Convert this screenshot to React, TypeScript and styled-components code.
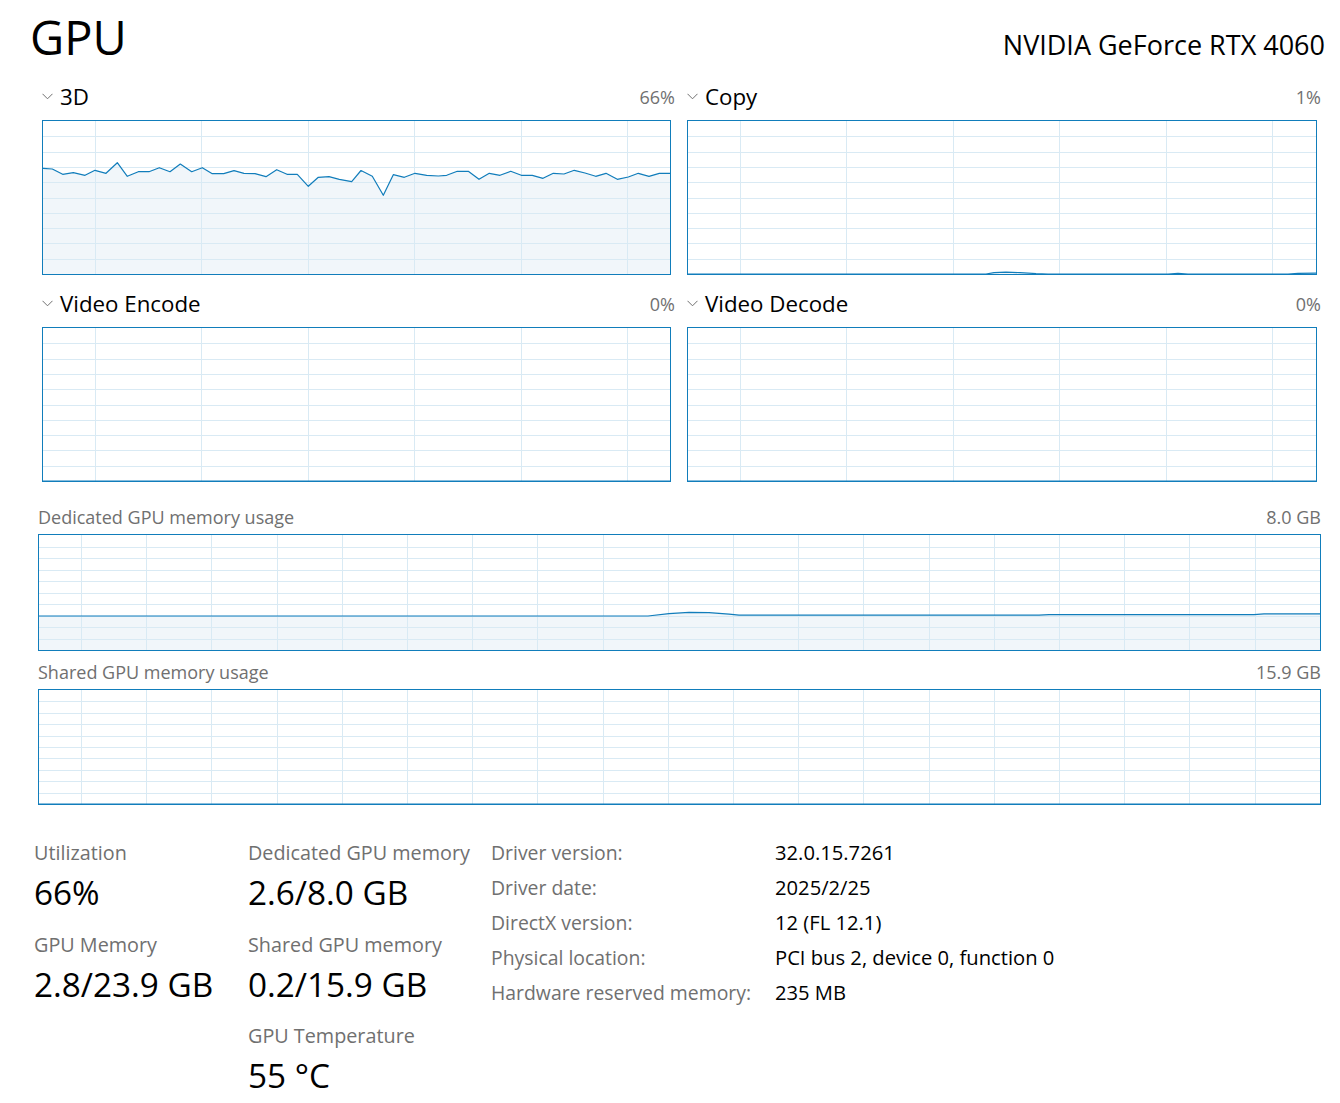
import React from 'react';
import styled, { createGlobalStyle } from 'styled-components';

const BLUE = '#117dbb';
const GRID = '#d9eaf4';
const FILL = '#f1f6fa';
const MUTED = '#707070';

const GlobalStyle = createGlobalStyle`
  html, body {
    margin: 0;
    padding: 0;
    background: #ffffff;
  }
  body {
    font-family: "Segoe UI", "Open Sans", "Noto Sans", sans-serif;
    color: #000000;
  }
`;

type Pt = [number, number];

// 3D engine history, in page pixels (inner area starts at 43,121)
const threeD: Pt[] = [
  [42.7, 168.3], [52.3, 169], [62.7, 174.3], [73.3, 172.7], [85, 175.3], [95, 170.3],
  [106, 173.3], [117.3, 162.7], [127.3, 176.3], [138.3, 171.7], [149, 171.7], [159.3, 167.7],
  [170, 171.7], [180.3, 164], [191.7, 171.7], [202.3, 167.7], [212.3, 173.7], [223.7, 173.7],
  [234, 170.7], [244, 173.3], [255, 173.7], [266, 176.7], [276.7, 169.7], [287, 174.3],
  [297.3, 174.3], [308.3, 186.3], [318.3, 177.3], [329, 176.7], [339.3, 179.3], [351.7, 181.7],
  [361, 170.5], [372.3, 176.3], [383.3, 195.3], [393.3, 174.7], [404.3, 177.3], [415, 173.3],
  [426.7, 175.3], [438.3, 176], [446.7, 175.3], [457.3, 171.3], [468.3, 171.3], [479, 179.3],
  [489.3, 173.3], [500, 175.3], [510.7, 171.3], [521.3, 175.3], [532.3, 175.3], [543, 178.3],
  [553.3, 173.3], [564, 174], [574.3, 170.3], [585, 173], [595.7, 176.3], [606, 173.3],
  [617.3, 179.3], [628.3, 177], [638.3, 173.3], [649, 176.3], [659.3, 173.3], [670, 173.3],
].map(([x, y]) => [x - 43, y - 121] as Pt);

const copy: Pt[] = [
  [0, 153], [298, 153], [306, 151.6], [318, 151.2], [332, 151.6], [348, 152.6], [360, 153],
  [480, 153], [490, 152.3], [500, 153], [600, 153], [610, 152.4], [628, 152.2],
];

const flat: Pt[] = [[0, 153], [628, 153]];

const dedicated: Pt[] = [
  [0, 81], [609, 81], [630, 78.6], [650, 77.4], [670, 77.6], [690, 79.2], [700, 80.2],
  [1000, 80.2], [1010, 79.6], [1215, 79.6], [1225, 78.8], [1282, 78.8],
];

const shared: Pt[] = [[0, 114], [1282, 114]];

interface GraphProps {
  w: number;
  h: number;
  offset: number;
  step: number;
  points: Pt[];
}

const Graph = ({ w, h, offset, step, points }: GraphProps) => {
  const cols: number[] = [];
  for (let x = offset; x < w; x += step) cols.push(Math.round(x) + 0.5);
  const rows: number[] = [];
  for (let i = 1; i < 10; i++) rows.push(Math.round((h * i) / 10) + 0.5);
  const line = points.map(([x, y]) => `${x},${y}`).join(' ');
  const area = `0,${h} ${line} ${w},${h}`;
  return (
    <svg width={w} height={h} viewBox={`0 0 ${w} ${h}`} style={{ display: 'block' }}>
      <polygon points={area} fill={FILL} />
      {rows.map((y) => (
        <line key={'r' + y} x1={0} x2={w} y1={y} y2={y} stroke={GRID} strokeWidth={1} shapeRendering="crispEdges" />
      ))}
      {cols.map((x) => (
        <line key={'c' + x} x1={x} x2={x} y1={0} y2={h} stroke={GRID} strokeWidth={1} shapeRendering="crispEdges" />
      ))}
      <polyline points={line} fill="none" stroke={BLUE} strokeWidth={1.2} strokeLinejoin="round" />
    </svg>
  );
};

const Chevron = () => (
  <svg width="11" height="7" viewBox="0 0 11 7">
    <polyline points="0.5,0.8 5.5,5.8 10.5,0.8" fill="none" stroke={MUTED} strokeWidth={1} />
  </svg>
);

const Page = styled.div`
  width: 1340px;
  box-sizing: border-box;
  padding: 9px 19px 0 38px;
`;

const Header = styled.header`
  display: flex;
  justify-content: space-between;
  align-items: baseline;
  height: 57px;
`;

const Title = styled.h1`
  margin: 0 0 0 -8px;
  font-size: 47px;
  line-height: 56px;
  font-weight: 400;
`;

const Adapter = styled.div`
  font-size: 27px;
  margin-right: -4px;
`;

const EngineGrid = styled.section`
  display: grid;
  grid-template-columns: 637px 1fr;
  column-gap: 8px;
  row-gap: 14px;
  margin-top: 16px;
`;

const Engine = styled.div`
  display: flex;
  flex-direction: column;
`;

const EngineHead = styled.div`
  display: flex;
  align-items: center;
  height: 29px;
  padding-left: 4px;
  margin-bottom: 9px;
`;

const EngineName = styled.span`
  font-size: 22.3px;
  margin-left: 7px;
  flex: 1;
`;

const Percent = styled.span`
  font-size: 18px;
  color: ${MUTED};
`;

const Frame = styled.div<{ $inset?: boolean }>`
  border: 1px solid ${BLUE};
  margin: ${(p) => (p.$inset ? '0 4px' : '0')};
  overflow: hidden;
`;

const MemoryBlock = styled.div`
  display: flex;
  flex-direction: column;
  & + & {
    margin-top: 9px;
  }
`;

const MemorySection = styled.section`
  margin-top: 23px;
`;

const MemoryHead = styled.div`
  display: flex;
  justify-content: space-between;
  align-items: center;
  height: 24px;
  margin-bottom: 5px;
  font-size: 18px;
  color: ${MUTED};
`;

const Stats = styled.section`
  display: flex;
  margin: 33px 0 0 -4px;
`;

const StatColumn = styled.div<{ $width: number }>`
  width: ${(p) => p.$width}px;
  display: flex;
  flex-direction: column;
`;

const Stat = styled.div`
  display: flex;
  flex-direction: column;
  margin-bottom: 13.5px;
`;

const StatLabel = styled.div`
  font-size: 19.8px;
  line-height: 30px;
  color: ${MUTED};
`;

const StatValue = styled.div`
  font-size: 33.3px;
  line-height: 48px;
`;

const InfoTable = styled.dl`
  display: grid;
  grid-template-columns: 284px auto;
  grid-auto-rows: 35px;
  align-items: center;
  margin: -3px 0 0;
  line-height: 35px;
`;

const InfoKey = styled.dt`
  font-size: 19.4px;
  color: ${MUTED};
  margin: 0;
  white-space: nowrap;
`;

const InfoVal = styled.dd`
  font-size: 20.2px;
  margin: 0;
  white-space: nowrap;
`;

const engines = [
  { name: '3D', pct: '66%', points: threeD, w: 627 },
  { name: 'Copy', pct: '1%', points: copy, w: 628 },
  { name: 'Video Encode', pct: '0%', points: flat, w: 627 },
  { name: 'Video Decode', pct: '0%', points: flat, w: 628 },
];

const info: [string, string][] = [
  ['Driver version:', '32.0.15.7261'],
  ['Driver date:', '2025/2/25'],
  ['DirectX version:', '12 (FL 12.1)'],
  ['Physical location:', 'PCI bus 2, device 0, function 0'],
  ['Hardware reserved memory:', '235 MB'],
];

export default function App() {
  return (
    <Page>
      <GlobalStyle />
      <Header>
        <Title>GPU</Title>
        <Adapter>NVIDIA GeForce RTX 4060</Adapter>
      </Header>

      <EngineGrid>
        {engines.map((e) => (
          <Engine key={e.name}>
            <EngineHead>
              <Chevron />
              <EngineName>{e.name}</EngineName>
              <Percent>{e.pct}</Percent>
            </EngineHead>
            <Frame $inset>
              <Graph w={e.w} h={153} offset={52} step={106.4} points={e.points} />
            </Frame>
          </Engine>
        ))}
      </EngineGrid>

      <MemorySection>
        <MemoryBlock>
          <MemoryHead>
            <span>Dedicated GPU memory usage</span>
            <span>8.0 GB</span>
          </MemoryHead>
          <Frame>
            <Graph w={1281} h={115} offset={42} step={65.2} points={dedicated} />
          </Frame>
        </MemoryBlock>
        <MemoryBlock>
          <MemoryHead>
            <span>Shared GPU memory usage</span>
            <span>15.9 GB</span>
          </MemoryHead>
          <Frame>
            <Graph w={1281} h={114} offset={42} step={65.2} points={shared} />
          </Frame>
        </MemoryBlock>
      </MemorySection>

      <Stats>
        <StatColumn $width={214}>
          <Stat>
            <StatLabel>Utilization</StatLabel>
            <StatValue>66%</StatValue>
          </Stat>
          <Stat>
            <StatLabel>GPU Memory</StatLabel>
            <StatValue>2.8/23.9 GB</StatValue>
          </Stat>
        </StatColumn>
        <StatColumn $width={243}>
          <Stat>
            <StatLabel>Dedicated GPU memory</StatLabel>
            <StatValue>2.6/8.0 GB</StatValue>
          </Stat>
          <Stat>
            <StatLabel>Shared GPU memory</StatLabel>
            <StatValue>0.2/15.9 GB</StatValue>
          </Stat>
          <Stat>
            <StatLabel>GPU Temperature</StatLabel>
            <StatValue>55 °C</StatValue>
          </Stat>
        </StatColumn>
        <InfoTable>
          {info.map(([k, v]) => (
            <React.Fragment key={k}>
              <InfoKey>{k}</InfoKey>
              <InfoVal>{v}</InfoVal>
            </React.Fragment>
          ))}
        </InfoTable>
      </Stats>
    </Page>
  );
}
